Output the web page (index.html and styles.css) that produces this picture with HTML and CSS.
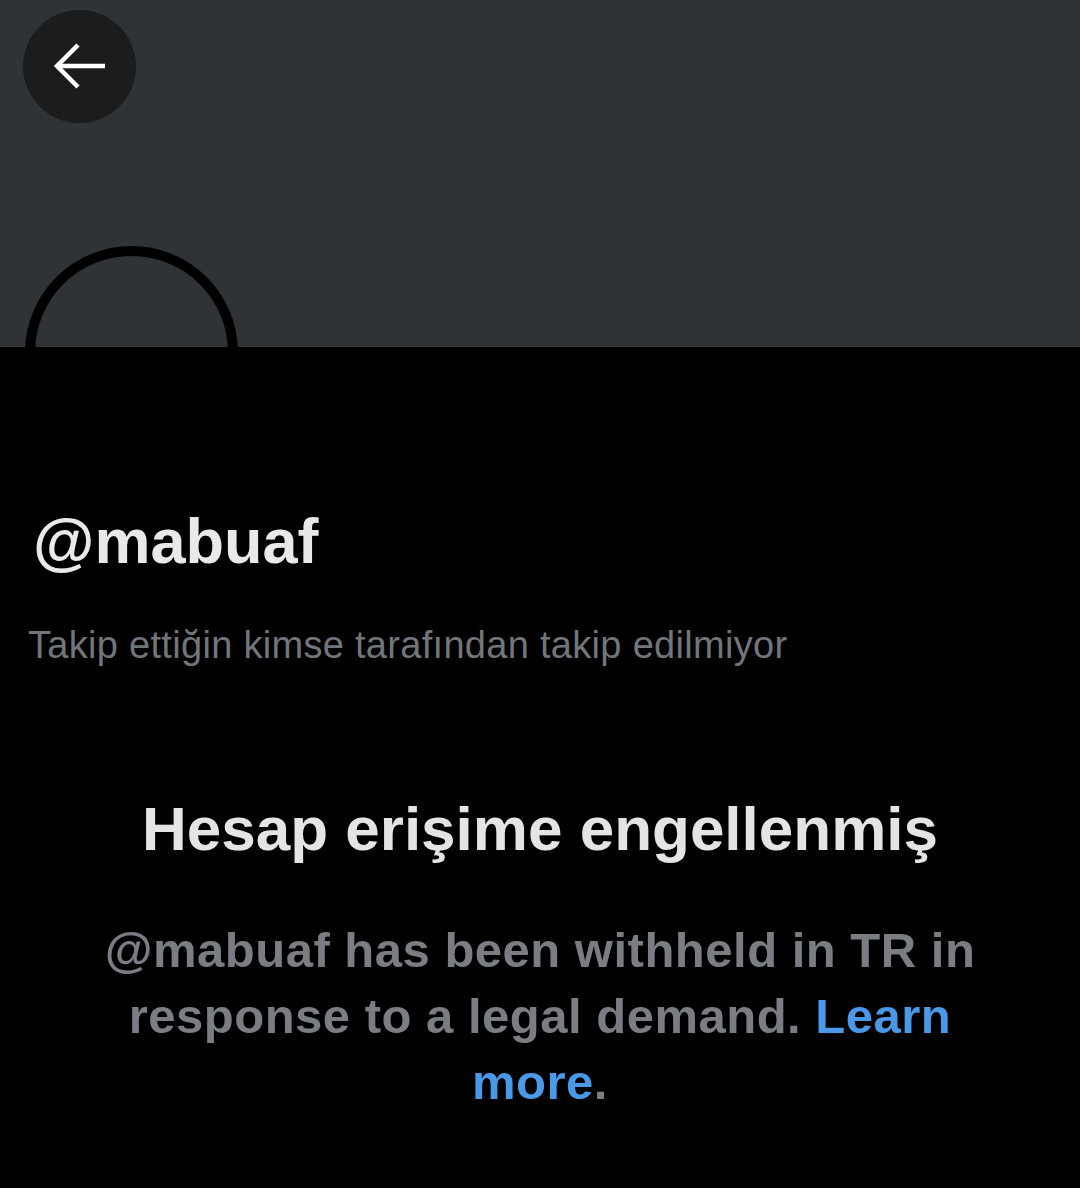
FILE: index.html
```html
<!DOCTYPE html>
<html lang="tr">
<head>
    <meta charset="UTF-8">
    <meta name="viewport" content="width=device-width, initial-scale=1.0">
    <title>@mabuaf</title>
    <link rel="stylesheet" href="styles.css">
</head>
<body>

    <div class="banner">
        <button class="back-btn" aria-label="Geri">
            <svg viewBox="0 0 113 113" width="113" height="113">
                <path d="M82 56 H35 M55 35 L34 56 L55 77" fill="none" stroke="#fff" stroke-width="4.5"/>
            </svg>
        </button>
        <div class="avatar"></div>
    </div>

    <div class="profile">
        <div class="handle">@mabuaf</div>
        <div class="followers-note">Takip ettiğin kimse tarafından takip edilmiyor</div>
    </div>

    <div class="withheld">
        <h2>Hesap erişime engellenmiş</h2>
        <p>@mabuaf has been withheld in TR in response to a legal demand. <a href="#">Learn more</a>.</p>
    </div>

</body>
</html>
```

FILE: styles.css
```css
body {
    margin: 0;
    background-color: #000;
    font-family: "Liberation Sans", Arial, sans-serif;
    color: #e7e9ea;
}

.banner {
    position: relative;
    height: 347px;
    background-color: #303336;
}

.back-btn {
    position: absolute;
    left: 23px;
    top: 10px;
    width: 113px;
    height: 113px;
    padding: 0;
    border: none;
    border-radius: 50%;
    background-color: #1a1c1e;
    cursor: pointer;
}

.back-btn svg {
    display: block;
}

.avatar {
    position: absolute;
    left: 25px;
    top: 246px;
    width: 193px;
    height: 193px;
    border: 10px solid #000;
    border-radius: 50%;
}

.profile {
    padding: 158px 0 0 0;
}

.handle {
    margin-left: 33px;
    font-size: 63px;
    line-height: 72px;
    font-weight: bold;
}

.followers-note {
    margin-top: 45px;
    margin-left: 28px;
    font-size: 38px;
    line-height: 46px;
    letter-spacing: 0.3px;
    color: #71767b;
}

.withheld {
    text-align: center;
    padding-top: 125px;
}

.withheld h2 {
    margin: 0;
    font-size: 62px;
    line-height: 72px;
    font-weight: bold;
    color: #e3e4e5;
}

.withheld p {
    width: 940px;
    margin: 52px auto 0;
    font-size: 49px;
    line-height: 66px;
    font-weight: bold;
    letter-spacing: 0.5px;
    color: #7a7e83;
}

.withheld a {
    color: #4a99e8;
    text-decoration: none;
}
```
